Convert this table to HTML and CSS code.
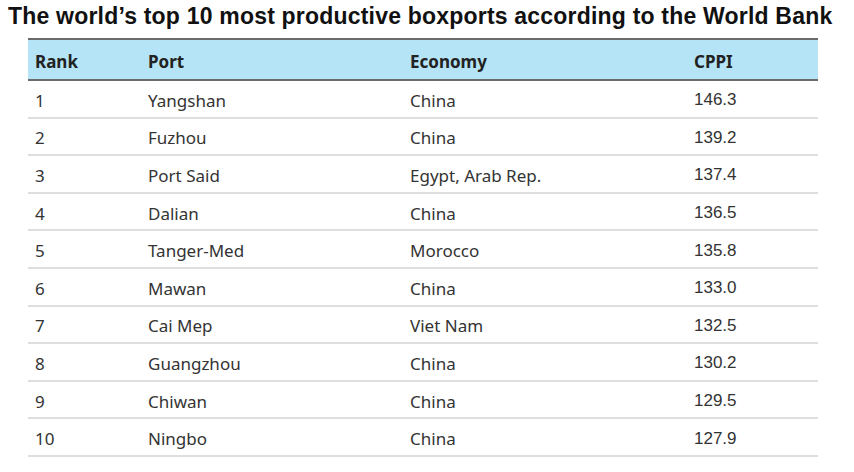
FILE: index.html
```html
<!DOCTYPE html>
<html>
<head>
<meta charset="utf-8">
<link rel="stylesheet" href="styles.css">
</head>
<body>
<h1 class="title">The world’s top 10 most productive boxports according to the World Bank</h1>
<table class="ports">
  <thead>
    <tr><th class="c-rank">Rank</th><th class="c-port">Port</th><th class="c-eco">Economy</th><th class="c-cppi">CPPI</th></tr>
  </thead>
  <tbody>
    <tr><td>1</td><td>Yangshan</td><td>China</td><td class="num">146.3</td></tr>
    <tr><td>2</td><td>Fuzhou</td><td>China</td><td class="num">139.2</td></tr>
    <tr><td>3</td><td>Port Said</td><td>Egypt, Arab Rep.</td><td class="num">137.4</td></tr>
    <tr><td>4</td><td>Dalian</td><td>China</td><td class="num">136.5</td></tr>
    <tr><td>5</td><td>Tanger-Med</td><td>Morocco</td><td class="num">135.8</td></tr>
    <tr><td>6</td><td>Mawan</td><td>China</td><td class="num">133.0</td></tr>
    <tr><td>7</td><td>Cai Mep</td><td>Viet Nam</td><td class="num">132.5</td></tr>
    <tr><td>8</td><td>Guangzhou</td><td>China</td><td class="num">130.2</td></tr>
    <tr><td>9</td><td>Chiwan</td><td>China</td><td class="num">129.5</td></tr>
    <tr><td>10</td><td>Ningbo</td><td>China</td><td class="num">127.9</td></tr>
  </tbody>
</table>
</body>
</html>
```
FILE: styles.css
```css
html, body {
  margin: 0;
  padding: 0;
  background: #ffffff;
}
.title {
  margin: 0;
  padding: 3px 0 0 8px;
  font-family: "Liberation Sans", Arial, sans-serif;
  font-weight: bold;
  font-size: 23px;
  letter-spacing: 0.2px;
  line-height: 26px;
  color: #111;
  white-space: nowrap;
}
.ports {
  margin: 9px 0 0 28px;
  width: 790px;
  border-collapse: collapse;
  font-family: "Noto Sans", Lato, sans-serif;
  font-size: 17px;
  color: #333;
}
.ports th {
  background: #b4e4f5;
  text-align: left;
  font-weight: bold;
  color: #222;
  height: 36px;
  padding: 3px 0 0 7px;
  border-top: 2px solid #6b6b6b;
  border-bottom: 2px solid #6b6b6b;
}
.ports td {
  height: 32.6px;
  padding: 3px 0 0 7px;
  border-bottom: 2px solid #dedede;
}
.c-rank { width: 106px; }
.c-port { width: 255px; }
.c-eco { width: 277px; }
.ports .num {
  font-family: "Liberation Sans", Arial, sans-serif;
  font-size: 17px;
}
```
